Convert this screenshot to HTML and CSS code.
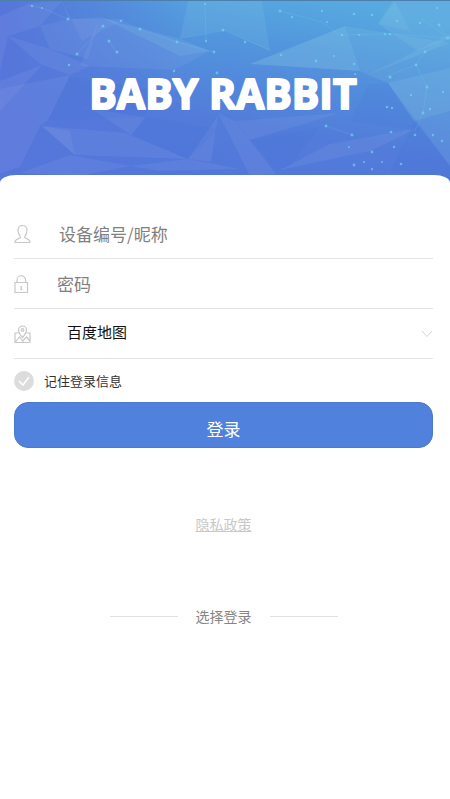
FILE: index.html
```html
<!DOCTYPE html>
<html lang="zh-CN">
<head>
<meta charset="utf-8">
<meta name="viewport" content="width=device-width, initial-scale=1">
<title>BABY RABBIT</title>
<link rel="stylesheet" href="styles.css">
</head>
<body>
<header class="hero">
  <svg class="hero-art" viewBox="0 0 450 185" preserveAspectRatio="xMidYMin slice" aria-hidden="true">
    <defs>
      <linearGradient id="sky" x1="0.35" y1="1" x2="0.75" y2="0">
        <stop offset="0" stop-color="#5276da"/>
        <stop offset="0.35" stop-color="#527cda"/>
        <stop offset="0.75" stop-color="#5296dd"/>
        <stop offset="1" stop-color="#57a9e0"/>
      </linearGradient>
      <linearGradient id="left" x1="0" y1="0" x2="1" y2="0">
        <stop offset="0" stop-color="#5775da"/>
        <stop offset="0.3" stop-color="#5577da" stop-opacity="0.75"/>
        <stop offset="1" stop-color="#5577da" stop-opacity="0"/>
      </linearGradient>
    </defs>
    <rect width="450" height="185" fill="url(#sky)"/>
    <rect width="190" height="185" fill="url(#left)"/>
    <g fill="#a7b5ee" fill-opacity="0.12">
      <path d="M0 15 30 2 62 0 40 25 8 35 0 70Z"/>
      <path d="M8 35 50 48 90 65 70 74 40 63Z"/>
      <path d="M0 88 70 74 48 119 40 125 20 166 0 172Z"/>
      <path d="M0 80 42 64 0 110Z"/>
      <path d="M40 25 68 18 100 16 88 58 50 48Z"/>
      <path d="M62 0 82 40 125 18 68 18Z"/>
      <path d="M100 16 210 50 175 69 80 65Z"/>
      <path d="M42 125 125 132 188 158 75 154Z"/>
      <path d="M42 125 70 130 75 154Z"/>
      <path d="M80 106 145 116 131 134 95 110Z"/>
      <path d="M20 172 70 154 130 165 80 175Z"/>
      <path d="M188 158 218 115 211 161Z"/>
      <path d="M218 112 235 120 276 173 250 175Z"/>
      <path d="M235 120 340 112 250 139Z"/>
      <path d="M280 169 330 143 418 127 370 150Z"/>
      <path d="M130 165 188 158 240 168 160 170Z"/>
    </g>
    <g fill="#91d0e7" fill-opacity="0.16">
      <path d="M188 0 262 0 270 50 226 30 180 38Z"/>
      <path d="M250 63 345 25 450 42 368 74 360 70Z"/>
      <path d="M345 25 360 70 250 63Z"/>
      <path d="M392 0 450 0 450 37 418 50 378 23Z"/>
      <path d="M368 74 450 33 450 165 388 82Z"/>
      <path d="M388 82 450 67 450 110 414 120Z"/>
      <path d="M378 23 395 0 410 30Z"/>
      <path d="M100 16 180 38 210 50 180 55Z"/>
    </g>
    <g fill="#406ed2" fill-opacity="0.14">
      <path d="M70 76 150 88 145 116 48 119Z"/>
      <path d="M148 116 218 128 188 158 133 134Z"/>
      <path d="M368 84 388 82 420 130 350 120Z"/>
      <path d="M414 120 450 165 450 185 390 170Z"/>
      <path d="M250 139 320 125 290 165 276 169Z"/>
    </g>
    <g fill="none" stroke="#7edce9" stroke-opacity="0.22" stroke-width="0.7">
      <path d="M28 4 42 7 68 18M103 25 77 53M109 40 117 52M121 20 140 28 177 41 214 51M205 3 206 40M225 30 270 49M280 10 322 21 340 34 390 33 448 37M421 17 448 37 425 51 416 64 385 76M416 64 427 86 423 112 415 130M326 125 352 134M448 37 439 25"/>
    </g>
    <g fill="#6edceb" fill-opacity="0.65">
      <circle cx="32" cy="5" r="1.2"/><circle cx="42" cy="7" r="1.1"/><circle cx="68" cy="18" r="1.5"/>
      <circle cx="103" cy="25" r="1.5"/><circle cx="109" cy="40" r="1.5"/><circle cx="117" cy="51" r="1.5"/>
      <circle cx="77" cy="53" r="1.5"/><circle cx="69" cy="64" r="1.3"/><circle cx="121" cy="20" r="1.3"/>
      <circle cx="140" cy="28" r="1.5"/><circle cx="177" cy="41" r="1.4"/><circle cx="174" cy="70" r="1.3"/>
      <circle cx="205" cy="3" r="1.1"/><circle cx="206" cy="40" r="1.2"/><circle cx="214" cy="51" r="1.4"/>
      <circle cx="217" cy="72" r="1.4"/><circle cx="223" cy="29" r="1.5"/><circle cx="245" cy="41" r="1.3"/>
      <circle cx="280" cy="10" r="1.4"/><circle cx="292" cy="16" r="1.2"/><circle cx="322" cy="10" r="1.2"/>
      <circle cx="327" cy="21" r="1.1"/><circle cx="354" cy="13" r="1.3"/><circle cx="372" cy="14" r="1.3"/>
      <circle cx="281" cy="54" r="1.3"/><circle cx="316" cy="60" r="1.4"/><circle cx="334" cy="55" r="1.1"/>
      <circle cx="354" cy="63" r="1.3"/><circle cx="355" cy="73" r="1.1"/><circle cx="342" cy="34" r="1.2"/>
      <circle cx="359" cy="34" r="1"/><circle cx="385" cy="33" r="1.2"/><circle cx="390" cy="33" r="1.3"/>
      <circle cx="397" cy="20" r="1.2"/><circle cx="420" cy="22" r="1.2"/><circle cx="437" cy="7" r="1.2"/>
      <circle cx="439" cy="24" r="1.4"/><circle cx="448" cy="37" r="1.5"/><circle cx="425" cy="51" r="1.4"/>
      <circle cx="416" cy="64" r="1.4"/><circle cx="390" cy="76" r="1.6"/><circle cx="427" cy="86" r="1.5"/>
      <circle cx="411" cy="94" r="1.2"/><circle cx="443" cy="91" r="1.2"/><circle cx="430" cy="108" r="1.2"/>
      <circle cx="423" cy="112" r="1.4"/><circle cx="387" cy="106" r="1.3"/><circle cx="392" cy="107" r="1.2"/>
      <circle cx="326" cy="125" r="1.4"/><circle cx="352" cy="134" r="1.4"/><circle cx="391" cy="131" r="1.3"/>
      <circle cx="415" cy="134" r="1.3"/><circle cx="433" cy="134" r="1.2"/><circle cx="372" cy="151" r="1.4"/>
      <circle cx="394" cy="146" r="1.2"/><circle cx="349" cy="146" r="1.1"/><circle cx="354" cy="164" r="1.4"/>
      <circle cx="364" cy="161" r="1.1"/><circle cx="382" cy="161" r="1.1"/><circle cx="401" cy="163" r="1.3"/>
      <circle cx="372" cy="168" r="1.2"/><circle cx="442" cy="140" r="1.2"/>
    </g>
  </svg>
  <h1 class="brand">
    <svg class="brand-mark" viewBox="0 0 320 70"><text class="brand-text" x="160" y="48" text-anchor="middle">BABY RABBIT</text></svg>
  </h1>
</header>
<main class="card">
  <form class="form">
    <div class="row">
      <label class="row-label" for="account" aria-label="设备编号/昵称">
        <svg class="icon" viewBox="0 0 18 20"><path d="M6.200 12.200C4.800 10.600 4 8.600 4 6.500 4 3.500 5.900 1.500 8.500 1.500s4.500 2 4.500 5c0 2.100-.8 4.100-2.200 5.700v1.500c.5.800 5.200 1.300 5.200 4.800H1c0-3.500 4.700-4 5.200-4.800z"/></svg>
      </label>
      <input class="field field-account" id="account" type="text" placeholder="设备编号/昵称">
    </div>
    <div class="row">
      <label class="row-label" for="password" aria-label="密码">
        <svg class="icon" viewBox="0 0 18 20"><path d="M1 8.500h12.500v10H1zM3 8.500V6.500a4.300 4.800 0 0 1 8.600 0v2M7.300 12v4M6.300 12.500h1M6.200 15.500h2.200"/></svg>
      </label>
      <input class="field" id="password" type="password" placeholder="密码">
    </div>
    <div class="row">
      <label class="row-label" for="map" aria-label="百度地图">
        <svg class="icon" viewBox="0 0 18 20"><path d="M4.500 9H1v9.500h15V9h-3.500M8.500 13.500C6 10.500 4.500 8.500 4.500 6a4 4 0 0 1 8 0c0 2.500-1.500 4.500-4 7.500zM1.500 18l4-5 4 5M8.500 17l4-4 3.500 4"/><circle cx="8.500" cy="6" r="1.300"/></svg>
      </label>
      <select class="field field-map" id="map"><option>百度地图</option></select>
      <svg class="chevron" viewBox="0 0 12 8" aria-hidden="true"><path d="M1 1l5 5.500L11 1"/></svg>
    </div>
    <label class="remember">
      <input class="remember-box" type="checkbox" checked>
      <svg class="remember-mark" viewBox="0 0 20 20" aria-hidden="true"><circle cx="10" cy="10" r="10"/><path d="M5 10l4 4 6-8"/></svg>
      <span>记住登录信息</span>
    </label>
    <button class="submit" type="submit">登录</button>
  </form>
  <a class="privacy" href="#privacy">隐私政策</a>
  <div class="divider"><span>选择登录</span></div>
</main>
</body>
</html>
```
FILE: styles.css
```css
* {
  box-sizing: border-box;
}

body {
  margin: 0;
  background: #fff;
  color: #333;
  font-family: "Noto Sans CJK SC", sans-serif;
}

.hero {
  position: relative;
  height: 185px;
  padding-top: 60px;
  border-top: 1px solid #4c7fae;
  overflow: hidden;
}

.hero-art {
  position: absolute;
  inset: 0;
  width: 100%;
  height: 100%;
}

.brand {
  position: relative;
  display: flex;
  justify-content: center;
  margin: 0;
  padding-right: 4px;
}

.brand-mark {
  width: 320px;
  height: 70px;
}

.brand-text {
  font-family: "Open Sans", sans-serif;
  font-size: 41px;
  font-weight: 700;
  fill: #fff;
  stroke: #fff;
  stroke-width: 2px;
  stroke-linejoin: round;
}

.card {
  position: relative;
  display: flex;
  flex-direction: column;
  align-items: center;
  margin-top: -10px;
  padding: 34px 17px 32px 14px;
  border-radius: 16px 16px 0 0 / 8px 8px 0 0;
  background: #fff;
}

.form {
  width: 100%;
}

.row {
  display: flex;
  align-items: center;
  height: 50px;
  border-bottom: 1px solid #e4e4e4;
}

.row-label {
  display: flex;
  width: 43px;
}

.icon {
  width: 18px;
  height: 20px;
  fill: none;
  stroke: #c8c8c8;
  stroke-width: 1.2;
}

.field {
  flex: 1;
  min-width: 0;
  height: 40px;
  padding: 0;
  border: 0;
  outline: 0;
  background: none;
  color: #333;
  font-family: inherit;
  font-size: 17px;
}

.field::placeholder {
  color: #808080;
  opacity: 1;
}

.field-account {
  padding-left: 2px;
}

.field-map {
  padding: 0 0 4px 10px;
  appearance: none;
  color: #111;
  font-size: 15px;
}

.chevron {
  width: 12px;
  height: 8px;
  fill: none;
  stroke: #d4d4d4;
}

.remember {
  display: flex;
  align-items: center;
  gap: 10px;
  height: 43px;
  font-size: 13px;
}

.remember-box {
  position: absolute;
  opacity: 0;
}

.remember-mark {
  width: 20px;
  height: 20px;
  fill: #dcdcdc;
}

.remember-mark path {
  fill: none;
  stroke: #fff;
  stroke-width: 1.5;
}

.submit {
  display: block;
  width: 100%;
  height: 46px;
  padding: 6px 0 0;
  border: 1px solid #4c79cc;
  border-radius: 14px;
  background: #5081dc;
  color: #fff;
  font-family: inherit;
  font-size: 17px;
}

.privacy {
  margin-top: 66px;
  color: #c8c8c8;
  font-size: 14px;
  line-height: 20px;
}

.divider {
  display: flex;
  align-items: center;
  gap: 18px;
  margin-top: 72px;
  color: #858585;
  font-size: 14px;
  line-height: 20px;
}

.divider::before,
.divider::after {
  width: 68px;
  height: 1px;
  background: #e2e2e2;
  content: "";
}
```
